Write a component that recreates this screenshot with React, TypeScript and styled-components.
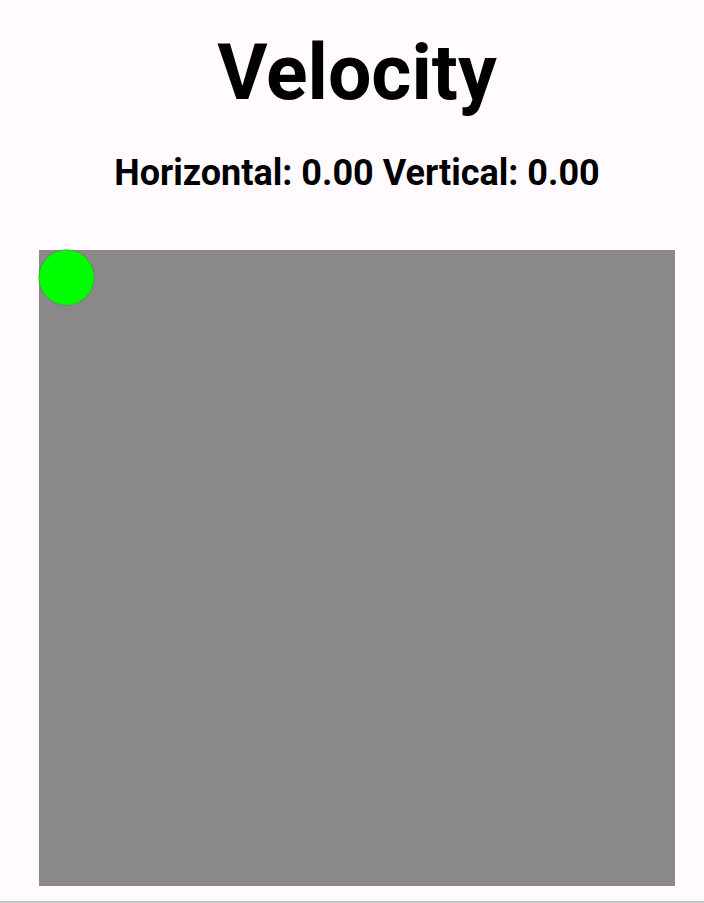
import React from "react";
import styled, { createGlobalStyle } from "styled-components";

const Global = createGlobalStyle`
  html, body { margin: 0; padding: 0; background: #fffbfe; }
  body { font-family: Roboto, "Noto Sans", sans-serif; }
`;

const Page = styled.div`
  height: 903px;
  box-sizing: border-box;
  display: flex;
  flex-direction: column;
  align-items: center;
  padding-left: 10px;
  border-bottom: 2px solid #c8c6c9;
`;

const Title = styled.h1`
  margin: 27px 0 0;
  font-size: 77px;
  font-weight: 700;
  line-height: 92px;
  color: #000;
`;

const Readout = styled.div`
  margin-top: 33px;
  font-size: 36px;
  font-weight: 700;
  line-height: 42px;
  color: #000;
`;

const Field = styled.div`
  margin-top: 56px;
  width: 636px;
  height: 636px;
  background: #898989;
  position: relative;
`;

const Ball = styled.div<{ $size: number }>`
  position: absolute;
  left: 0;
  top: 0;
  width: ${(p) => p.$size}px;
  height: ${(p) => p.$size}px;
  border-radius: 50%;
  background: #00ff00;
  box-shadow: 0 0 0 0.5px #4a7a4a;
`;

export default function App() {
  return (
    <>
      <Global />
      <Page>
        <Title>Velocity</Title>
        <Readout>Horizontal: 0.00 Vertical: 0.00</Readout>
        <Field>
          <Ball $size={55} />
        </Field>
      </Page>
    </>
  );
}
